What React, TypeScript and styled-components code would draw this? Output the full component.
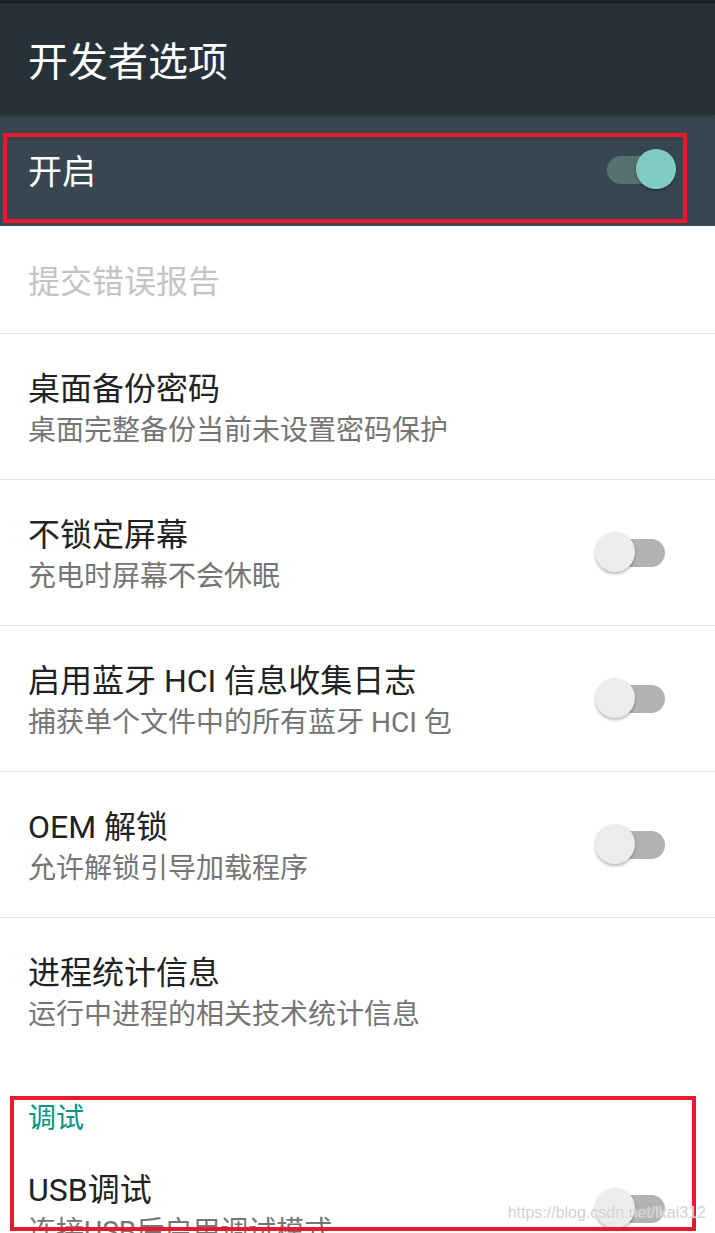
import React from 'react'
import styled, { createGlobalStyle } from 'styled-components'

const FONT = `"Roboto", "Noto Sans CJK SC", "Noto Sans", sans-serif`

const GlobalStyle = createGlobalStyle`
  html, body {
    margin: 0;
    padding: 0;
    background: #ffffff;
  }
  body {
    font-family: ${FONT};
    -webkit-font-smoothing: antialiased;
  }
`

type Pref = {
  title: string
  summary?: string
  toggle?: boolean
  disabled?: boolean
}

const prefs: Pref[] = [
  { title: '提交错误报告', disabled: true },
  { title: '桌面备份密码', summary: '桌面完整备份当前未设置密码保护' },
  { title: '不锁定屏幕', summary: '充电时屏幕不会休眠', toggle: true },
  { title: '启用蓝牙 HCI 信息收集日志', summary: '捕获单个文件中的所有蓝牙 HCI 包', toggle: true },
  { title: 'OEM 解锁', summary: '允许解锁引导加载程序', toggle: true },
  { title: '进程统计信息', summary: '运行中进程的相关技术统计信息' },
]

const Toggle: React.FC<{ on?: boolean; dark?: boolean }> = ({ on = false, dark = false }) => (
  <SwitchBox>
    <Track $on={on} $dark={dark} />
    <Thumb $on={on} />
  </SwitchBox>
)

export default function App() {
  return (
    <>
      <GlobalStyle />
      <Screen>
        <StatusStrip />
        <AppBar>
          <AppTitle>开发者选项</AppTitle>
        </AppBar>
        <MasterBar>
          <MasterLabel>开启</MasterLabel>
          <Toggle on dark />
          <Annotation $top={133} $left={3} $width={684} $height={90} />
        </MasterBar>
        <List>
          {prefs.map((p, i) => (
            <Row key={p.title} $single={!p.summary} $last={i === prefs.length - 1}>
              <TextCol>
                <RowTitle $disabled={p.disabled}>{p.title}</RowTitle>
                {p.summary && <RowSummary>{p.summary}</RowSummary>}
              </TextCol>
              {p.toggle && <Toggle />}
            </Row>
          ))}
          <Category>调试</Category>
          <Row $last>
            <TextCol>
              <RowTitle>USB调试</RowTitle>
              <RowSummary>连接USB后启用调试模式</RowSummary>
            </TextCol>
            <Toggle />
          </Row>
          <Annotation $top={1096} $left={10} $width={686} $height={135} />
          <Watermark>https://blog.csdn.net/lkai312</Watermark>
        </List>
      </Screen>
    </>
  )
}

const Screen = styled.div`
  position: relative;
  width: 715px;
  height: 1233px;
  overflow: hidden;
  background: #ffffff;
`

const StatusStrip = styled.div`
  height: 3px;
  background: #1c2327;
`

const AppBar = styled.header`
  display: flex;
  align-items: center;
  height: 112px;
  padding: 0 28px;
  box-sizing: border-box;
  background: #263238;
  box-shadow: 0 1px 4px rgba(0, 0, 0, 0.3);
  position: relative;
  z-index: 1;
`

const AppTitle = styled.h1`
  margin: 0;
  font-size: 40px;
  font-weight: 400;
  color: #ffffff;
`

const MasterBar = styled.div`
  display: flex;
  align-items: center;
  justify-content: space-between;
  height: 111px;
  padding: 0 39px 3px 28px;
  box-sizing: border-box;
  background: #37474f;
`

const MasterLabel = styled.span`
  font-size: 34px;
  color: #ffffff;
`

const SwitchBox = styled.div`
  position: relative;
  flex: none;
  width: 81px;
  height: 41px;
`

const Track = styled.div<{ $on: boolean; $dark: boolean }>`
  position: absolute;
  left: 12px;
  right: 11px;
  top: 7px;
  height: 28px;
  border-radius: 14px;
  background: ${p => (p.$on ? (p.$dark ? '#557271' : '#9fd6d0') : '#b2b2b2')};
`

const Thumb = styled.div<{ $on: boolean }>`
  position: absolute;
  top: 0;
  left: ${p => (p.$on ? '41px' : '0')};
  width: 40px;
  height: 40px;
  border-radius: 50%;
  background: ${p => (p.$on ? '#80cbc4' : '#ececec')};
  box-shadow: 0 2px 3px rgba(0, 0, 0, 0.28);
`

const List = styled.div`
  display: flex;
  flex-direction: column;
`

const Row = styled.div<{ $single?: boolean; $last?: boolean }>`
  display: flex;
  align-items: center;
  justify-content: space-between;
  height: ${p => (p.$single ? '108px' : '146px')};
  padding: 0 39px 0 28px;
  box-sizing: border-box;
  border-bottom: ${p => (p.$last ? 'none' : '1px solid #e2e2e2')};
  flex: none;
`

const TextCol = styled.div`
  display: flex;
  flex-direction: column;
  padding-top: 5px;
`

const RowTitle = styled.div<{ $disabled?: boolean }>`
  font-size: 32px;
  line-height: 42px;
  color: ${p => (p.$disabled ? '#c4c4c4' : '#212121')};
`

const RowSummary = styled.div`
  font-size: 28px;
  line-height: 41px;
  color: #757575;
`

const Category = styled.div`
  padding: 40px 28px 1px;
  font-size: 28px;
  line-height: 30px;
  color: #009688;
`

const Annotation = styled.div<{ $top: number; $left: number; $width: number; $height: number }>`
  position: absolute;
  top: ${p => p.$top}px;
  left: ${p => p.$left}px;
  width: ${p => p.$width}px;
  height: ${p => p.$height}px;
  box-sizing: border-box;
  border: 4px solid #e8192c;
  pointer-events: none;
  z-index: 2;
`

const Watermark = styled.div`
  position: absolute;
  right: 9px;
  top: 1204px;
  font-family: "Liberation Sans", Arial, sans-serif;
  font-size: 16px;
  color: rgba(200, 200, 200, 0.85);
  text-shadow: 0 0 1px #ffffff;
  z-index: 3;
`
